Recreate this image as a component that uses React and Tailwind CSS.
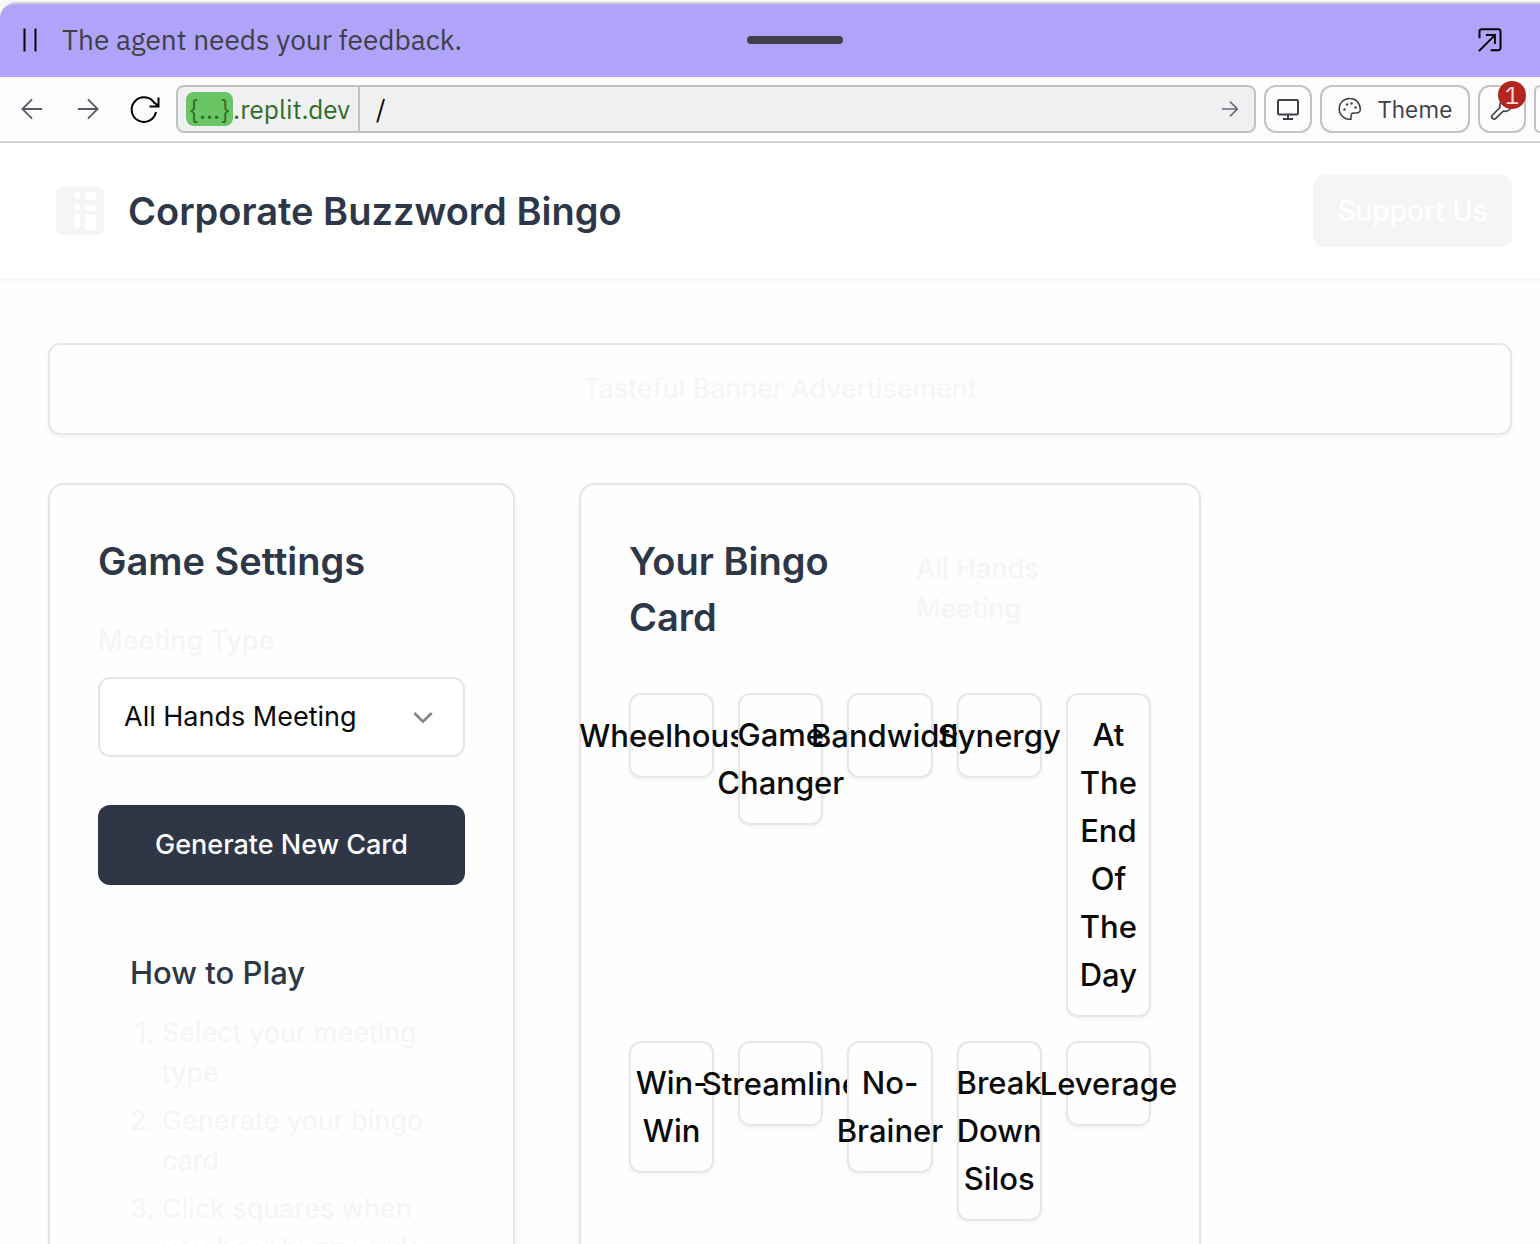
import React from "react";

const words = [
  "Wheelhouse",
  "Game Changer",
  "Bandwidth",
  "Synergy",
  "At The End Of The Day",
  "Win-Win",
  "Streamline",
  "No-Brainer",
  "Break Down Silos",
  "Leverage",
];

const steps = [
  "Select your meeting type",
  "Generate your bingo card",
  "Click squares when you hear buzzwords",
];

function Icon({ size = 24, width = 2, className = "", children }) {
  return (
    <svg
      width={size}
      height={size}
      viewBox="0 0 24 24"
      fill="none"
      stroke="currentColor"
      strokeWidth={width}
      className={className}
      aria-hidden="true"
    >
      {children}
    </svg>
  );
}

function AgentBar() {
  return (
    <div className="bg-[#f7f7f7]">
      <div className="mt-0.5 rounded-tl-2xl border-t-2 border-[#d0d2d4] bg-[#b0a3fa]">
        <div className="grid h-[73px] grid-cols-[1fr_auto_1fr] items-center pr-9 pb-0.5 pl-[18px]">
          <div className="flex items-center gap-5 text-[#3f3f48]">
            <Icon className="text-black" width={2}>
              <path d="M6.5 0.5v23M17.5 0.5v23" />
            </Icon>
            <p className="text-[28px] leading-10 whitespace-nowrap">The agent needs your feedback.</p>
          </div>
          <div className="ml-17 h-2 w-24 rounded-full bg-[#3f3f48]" />
          <button aria-label="Open in new window" className="justify-self-end text-black">
            <Icon size={28} width={1.7}>
              <path d="M3 10.5V4.5a1.8 1.8 0 0 1 1.8-1.8h14.400A1.8 1.8 0 0 1 21 4.5v14.400a1.8 1.8 0 0 1-1.8 1.8h-6.700M2.5 21.5L16.2 7.8M8.5 7.8h7.700v7.700" />
            </Icon>
          </button>
        </div>
      </div>
    </div>
  );
}

function Toolbar() {
  const box = "flex h-12 shrink-0 items-center justify-center rounded-xl border-2 border-[#c0c2c4]";
  return (
    <div className="flex items-center overflow-hidden border-b-2 border-[#d4d5d6] bg-[#fcfcfc] py-2 pl-4 text-2xl text-[#3f3f48]">
      <button aria-label="Back" className="flex size-8 shrink-0 items-center justify-center text-[#5a5a64]">
        <Icon size={22}>
          <path d="M23 12H1.500M12 1.500L1.500 12L12 22.500" />
        </Icon>
      </button>
      <button aria-label="Forward" className="ml-6 flex size-8 shrink-0 items-center justify-center text-[#5a5a64]">
        <Icon size={22}>
          <path d="M1 12H22.500M12 1.500L22.500 12L12 22.500" />
        </Icon>
      </button>
      <button aria-label="Reload" className="mr-4 ml-6 flex size-8 shrink-0 items-center justify-center text-black">
        <svg width="32" height="32" viewBox="0 0 32 32" fill="none" stroke="currentColor" strokeWidth="2">
          <path d="M28 19A12.300 12.300 0 1 1 26 9.500L30.500 13M21.500 13.500H30.500V4.500" />
        </svg>
      </button>
      <div className="flex h-12 min-w-0 flex-1 items-stretch rounded-lg border-2 border-[#c0c2c4] bg-[#eff0f2] text-[26px]">
        <div className="flex items-center border-r-2 border-[#c0c2c4] px-2 text-[#2f6b26]">
          <span className="rounded-lg bg-[#6ac565] px-1 leading-[34px]">{"{...}"}</span>
          <span>.replit.dev</span>
        </div>
        <input aria-label="Path" defaultValue="/" className="min-w-0 flex-1 bg-transparent px-4 text-black outline-none" />
        <button aria-label="Go" className="px-4 text-[#6b6b74]">
          <Icon size={16}>
            <path strokeWidth="2.500" d="M0 12H23M12 1L23 12L12 23" />
          </Icon>
        </button>
      </div>
      <button aria-label="Device" className={`${box} ml-2 w-12`}>
        <Icon>
          <rect x="2" y="3" width="20" height="14.500" rx="1.500" />
          <path d="M12 17.500V22M7 22h10" />
        </Icon>
      </button>
      <button className={`${box} ml-2 w-[150px] gap-4`}>
        <Icon width={1.5}>
          <path d="M12 1.500A10.400 10.400 0 1 0 13 22.200v-3.500a2.600 2.600 0 0 1 2.600-2.600h3.200a3.500 3.500 0 0 0 3.500-3.500C22.300 6 17.500 1.500 12 1.500z" />
          <g fill="currentColor" stroke="none">
            <circle cx="6.500" cy="12.500" r="1.200" />
            <circle cx="9" cy="7.500" r="1.200" />
            <circle cx="13.500" cy="6.500" r="1.200" />
            <circle cx="17.500" cy="10.500" r="1.200" />
          </g>
        </Icon>
        Theme
      </button>
      <button aria-label="Tools, 1 issue" className={`${box} relative ml-2 w-12`}>
        <Icon width={1.7}>
          <path d="M21 6.500l-3.500 3.500-3.500-3.500L17.500 3A6 6 0 0 0 10 10.500L2.500 18a2.200 2.200 0 0 0 3.300 3.300L13.500 14A6 6 0 0 0 21 6.500z" />
        </Icon>
        <span className="absolute -top-1.5 -right-0.5 flex size-7 items-center justify-center rounded-full bg-[#b3261e] text-2xl text-[#fbdedc]">
          1
        </span>
      </button>
      <div className="ml-2 h-12 w-1.5 shrink-0 rounded-l-xl border-2 border-r-0 border-[#c0c2c4]" />
    </div>
  );
}

function Header() {
  return (
    <header className="flex items-center justify-between bg-white py-8 pr-7 pl-14 shadow-[0_2px_4px_rgba(0,0,0,0.05)]">
      <div className="flex items-center gap-6">
        <svg width="48" height="48" viewBox="0 0 48 48" aria-hidden="true">
          <rect width="48" height="48" rx="5" fill="#f5f5f3" />
          <g fill="#fff">
            <path d="M18.500 5h5.500v7h-5.500zM29 5h11v8H29zM18.500 17h5.500v6h-5.500zM29 18.500h11v5.500H29zM18.500 27h5.500v14.500h-5.500zM29 27h11v16H29z" />
          </g>
        </svg>
        <h1 className="text-[38px] leading-[56px] font-semibold text-[#2d3748]">Corporate Buzzword Bingo</h1>
      </div>
      <button className="h-[72px] rounded-xl bg-[#f5f5f3] px-6 text-[28px] font-medium text-white">Support Us</button>
    </header>
  );
}

function Settings() {
  return (
    <section className="rounded-2xl border-2 border-[#e5e5e5] bg-[#fefefe] p-12 shadow-[0_2px_4px_rgba(0,0,0,0.05)]">
      <h2 className="text-[38px] leading-[56px] font-semibold whitespace-nowrap text-[#2d3748]">Game Settings</h2>
      <label htmlFor="meeting" className="mt-8 block text-[27px] leading-10 font-medium text-[#f5f5f4]">
        Meeting Type
      </label>
      <div className="relative mt-4">
        <select id="meeting" className="h-20 w-full appearance-none rounded-xl border-2 border-[#e5e5e5] bg-white px-6 text-[27px] text-[#0a0a0a]">
          <option>All Hands Meeting</option>
        </select>
        <Icon size={32} className="pointer-events-none absolute top-6 right-[26px] text-[#858585]">
          <path d="M5.500 9l6.500 6.500L18.500 9" />
        </Icon>
      </div>
      <button className="mt-12 h-20 w-full rounded-xl bg-[#2f3646] text-[27px] font-medium whitespace-nowrap text-white">Generate New Card</button>
      <div className="mt-8 p-8">
        <h3 className="text-[31px] leading-12 font-medium text-[#2d3748]">How to Play</h3>
        <ol className="mt-4 space-y-2 text-[27px] leading-10 text-[#f5f5f4]">
          {steps.map((step, i) => (
            <li key={step} className="flex gap-2">
              <span className="flex w-6 shrink-0 justify-end whitespace-nowrap">{i + 1}.</span>
              <span>{step}</span>
            </li>
          ))}
        </ol>
      </div>
    </section>
  );
}

function BingoCard() {
  return (
    <section className="rounded-2xl border-2 border-[#e5e5e5] bg-[#fefefe] p-12 shadow-[0_2px_4px_rgba(0,0,0,0.05)]">
      <div className="grid grid-cols-2 items-center">
        <h2 className="text-[38px] leading-[56px] font-semibold text-[#2d3748]">Your Bingo Card</h2>
        <p className="rounded-full bg-[#fdfdfd] px-[26px] py-2 text-[27px] leading-10 font-medium text-[#f5f5f4]">All Hands Meeting</p>
      </div>
      <div className="mt-12 grid grid-cols-5 items-start gap-6">
        {words.map((word) => (
          <button
            key={word}
            className="flex aspect-square w-full min-w-0 items-center justify-center rounded-xl border-2 border-[#e5e7eb] bg-[#fefefe] py-4 text-center text-[31px] leading-12 font-medium text-[#0a0a0a] shadow-[0_2px_4px_rgba(0,0,0,0.05)]"
          >
            {word}
          </button>
        ))}
      </div>
    </section>
  );
}

export default function App() {
  return (
    <div className="flex h-screen flex-col overflow-hidden bg-[#fefefe] font-['IBM_Plex_Sans','Roboto',sans-serif]">
      <AgentBar />
      <Toolbar />
      <div className="min-h-0 flex-1 overflow-hidden font-['Inter',sans-serif]">
        <Header />
        <main className="pt-16 pr-7 pl-12">
          <div className="rounded-xl border-2 border-[#e5e7eb] bg-[#fefefe] py-6 text-center text-[27px] leading-10 text-[#f5f5f4] shadow-[0_2px_4px_rgba(0,0,0,0.05)]">
            Tasteful Banner Advertisement
          </div>
          <div className="mt-12 grid grid-cols-[467fr_622fr_247fr] gap-16">
            <Settings />
            <BingoCard />
          </div>
        </main>
      </div>
    </div>
  );
}
